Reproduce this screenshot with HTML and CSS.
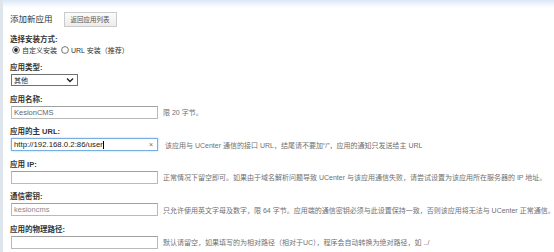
FILE: index.html
```html
<!DOCTYPE html>
<html lang="zh-CN">
<head>
<meta charset="utf-8">
<title>添加新应用</title>
<link rel="stylesheet" href="styles.css">
</head>
<body>
<div class="page">
  <div class="header">
    <span class="title">添加新应用</span>
    <span class="back-btn">返回应用列表</span>
  </div>

  <div class="label">选择安装方式:</div>
  <div class="radios">
    <span class="radio">
      <svg width="8" height="8" viewBox="0 0 8 8"><circle cx="4" cy="4" r="3.4" fill="#fff" stroke="#555" stroke-width="0.8"/><circle cx="4" cy="4" r="1.9" fill="#222"/></svg>
      自定义安装
    </span>
    <span class="radio">
      <svg width="8" height="8" viewBox="0 0 8 8"><circle cx="4" cy="4" r="3.4" fill="#fff" stroke="#555" stroke-width="0.8"/></svg>
      URL 安装（推荐）
    </span>
  </div>

  <div class="group">
    <div class="label label-tight">应用类型:</div>
    <div class="select">
      <span>其他</span>
      <svg width="8" height="6" viewBox="0 0 8 6"><path d="M1 1.5 L4 4.5 L7 1.5" fill="none" stroke="#222" stroke-width="1.4"/></svg>
    </div>
  </div>

  <div class="group">
    <div class="label label-tight">应用名称:</div>
    <div class="row">
      <div class="field"><span class="val">KesionCMS</span></div>
      <span class="hint">限 20 字节。</span>
    </div>
  </div>

  <div class="group">
    <div class="label label-tight">应用的主 URL:</div>
    <div class="row">
      <div class="field focused"><span class="val dark">http://192.168.0.2:86/user</span><span class="caret"></span><span class="clear">×</span></div>
      <span class="hint hint-wide">该应用与 UCenter 通信的接口 URL，结尾请不要加“/”，应用的通知只发送给主 URL</span>
    </div>
  </div>

  <div class="group">
    <div class="label label-tight">应用 IP:</div>
    <div class="row">
      <div class="field"></div>
      <span class="hint">正常情况下留空即可。如果由于域名解析问题导致 UCenter 与该应用通信失败，请尝试设置为该应用所在服务器的 IP 地址。</span>
    </div>
  </div>

  <div class="group">
    <div class="label label-tight">通信密钥:</div>
    <div class="row">
      <div class="field"><span class="val light">kesioncms</span></div>
      <span class="hint">只允许使用英文字母及数字，限 64 字节。应用端的通信密钥必须与此设置保持一致，否则该应用将无法与 UCenter 正常通信。</span>
    </div>
  </div>

  <div class="group">
    <div class="label label-tight">应用的物理路径:</div>
    <div class="row">
      <div class="field"></div>
      <span class="hint">默认请留空，如果填写的为相对路径（相对于UC），程序会自动转换为绝对路径，如 ../</span>
    </div>
  </div>
</div>
</body>
</html>
```

FILE: styles.css
```css
html, body {
  margin: 0;
  padding: 0;
  background: #fff;
}

body {
  font-family: "Liberation Sans", "Noto Sans CJK SC", sans-serif;
  color: #333;
}

.page {
  height: 252px;
  box-sizing: border-box;
  border-left: 3px solid #dfe5ec;
  background: linear-gradient(#d9e7f5 0, #eef5fb 4px, #fff 8px);
  padding: 12px 0 0 7px;
  overflow: hidden;
}

.header {
  display: flex;
  align-items: center;
  gap: 11px;
  height: 15px;
  margin-bottom: 8px;
}

.title {
  font-size: 8.5px;
  color: #333;
  line-height: 15px;
}

.back-btn {
  box-sizing: border-box;
  height: 15px;
  line-height: 13px;
  padding: 0 6px;
  font-size: 6.5px;
  color: #555;
  border: 1px solid #cbcbcb;
  background: linear-gradient(#fbfbfb, #ececec);
}

.label {
  font-size: 7.5px;
  font-weight: bold;
  color: #333;
  height: 10px;
  line-height: 10px;
  white-space: nowrap;
}

.label-tight {
  margin-bottom: 1px;
}

.radios {
  display: flex;
  align-items: center;
  gap: 4px;
  height: 10px;
  margin-bottom: 8px;
  padding-left: 2px;
  font-size: 7px;
  color: #333;
}

.radio {
  display: flex;
  align-items: center;
  gap: 2px;
}

.group {
  margin-bottom: 8.5px;
}

.select {
  box-sizing: border-box;
  width: 67px;
  height: 12px;
  margin-left: 1px;
  border: 1px solid #707070;
  background: #fff;
  display: flex;
  align-items: center;
  justify-content: space-between;
  padding: 0 3px 0 2px;
  font-size: 7px;
  color: #222;
}

.row {
  display: flex;
  align-items: center;
  height: 13px;
}

.field {
  box-sizing: border-box;
  width: 147px;
  height: 13px;
  margin-left: 1px;
  border: 1px solid #b9b9b9;
  border-top-color: #a0a0a0;
  background: #fff;
  display: flex;
  align-items: center;
  padding: 0 2px;
  flex-shrink: 0;
  position: relative;
}

.field.focused {
  border-color: #7aaee0;
  box-shadow: 0 0 2px #a9cdf0;
}

.val {
  font-size: 7.5px;
  color: #666;
  white-space: nowrap;
}

.val.dark {
  font-size: 7.8px;
  color: #222;
}

.val.light {
  color: #8a8a8a;
}

.caret {
  display: inline-block;
  width: 1px;
  height: 8px;
  background: #000;
  margin-left: 0.5px;
}

.clear {
  position: absolute;
  right: 4px;
  top: 0;
  line-height: 11px;
  font-size: 7px;
  color: #666;
}

.hint {
  margin-left: 5px;
  font-size: 7px;
  color: #707070;
  white-space: nowrap;
}

.hint-wide {
  margin-left: 7px;
}
```
